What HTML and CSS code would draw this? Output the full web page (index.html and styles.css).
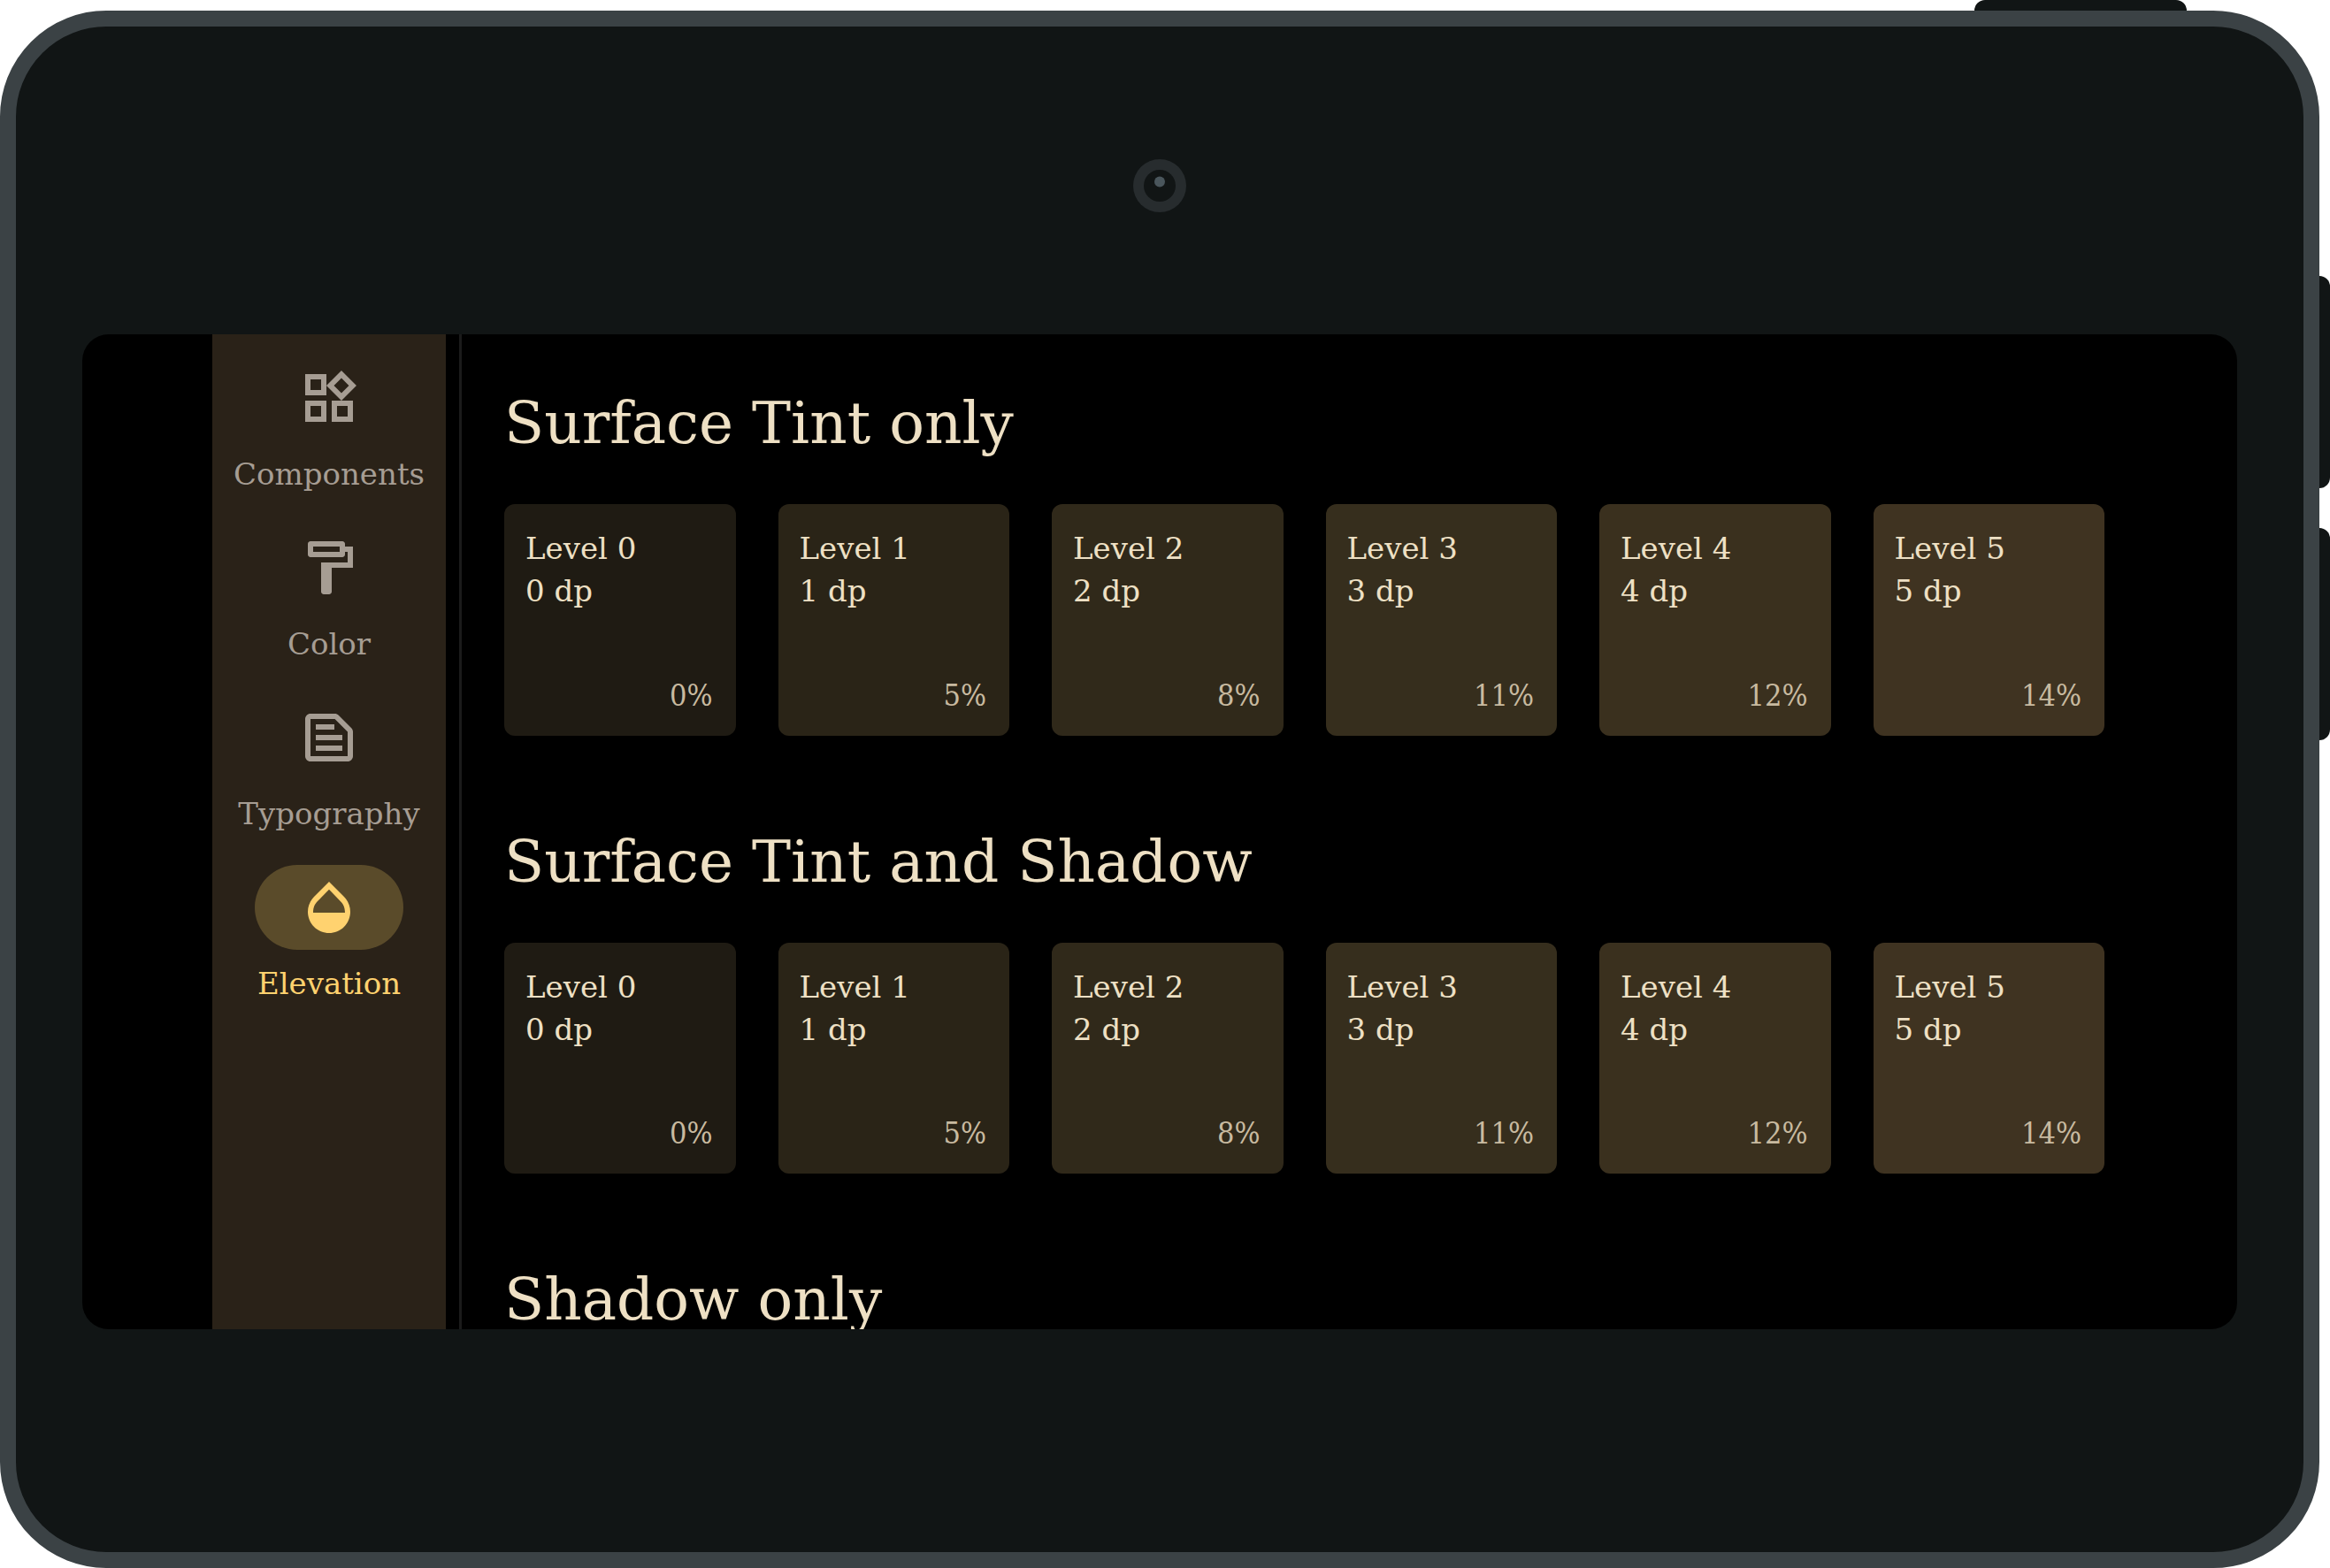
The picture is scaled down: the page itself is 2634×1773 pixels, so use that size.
FILE: index.html
```html
<!DOCTYPE html>
<html lang="en">
<head>
<meta charset="utf-8">
<meta name="viewport" content="width=device-width, initial-scale=1">
<title>Elevation</title>
<link rel="stylesheet" href="styles.css">
</head>
<body>
<div class="tablet">
  <div class="top-keys"><span class="key key-wide"></span></div>
  <div class="bezel">
    <div class="camera-bar">
      <svg class="camera" viewBox="0 0 60 60" aria-hidden="true"><circle cx="30" cy="30" r="30" fill="#272c2e"/><circle cx="30" cy="30" r="18" fill="#111515"/><circle cx="30" cy="25.5" r="6" fill="#4a565c"/></svg>
    </div>
    <div class="screen">
      <nav class="rail">
        <a class="rail-item" href="#components">
          <span class="rail-icon"><svg viewBox="0 0 24 24" aria-hidden="true"><path d="M16.66 4.52l2.83 2.83-2.83 2.83-2.83-2.83 2.83-2.83M9 5v4H5V5h4m10 10v4h-4v-4h4M9 15v4H5v-4h4m7.66-13.31L11 7.34 16.66 13l5.66-5.66-5.66-5.65zM11 3H3v8h8V3zm10 10h-8v8h8v-8zm-10 0H3v8h8v-8z"/></svg></span>
          <span class="rail-label">Components</span>
        </a>
        <a class="rail-item" href="#color">
          <span class="rail-icon"><svg viewBox="0 0 24 24" aria-hidden="true"><path d="M18 4V3c0-.55-.45-1-1-1H5c-.55 0-1 .45-1 1v4c0 .55.45 1 1 1h12c.55 0 1-.45 1-1V6h1v4H9v11c0 .55.45 1 1 1h2c.55 0 1-.45 1-1v-9h8V4h-3zm-2 2H6V4h10v2z"/></svg></span>
          <span class="rail-label">Color</span>
        </a>
        <a class="rail-item" href="#typography">
          <span class="rail-icon"><svg viewBox="0 0 24 24" aria-hidden="true"><path d="M14.17 5L19 9.83V19H5V5h9.17m0-2H5c-1.1 0-2 .9-2 2v14c0 1.1.9 2 2 2h14c1.1 0 2-.9 2-2V9.83c0-.53-.21-1.04-.59-1.41l-4.83-4.83c-.37-.38-.88-.59-1.41-.59zM7 15h10v2H7v-2zm0-4h10v2H7v-2zm0-4h7v2H7V7z"/></svg></span>
          <span class="rail-label">Typography</span>
        </a>
        <a class="rail-item is-active" href="#elevation" aria-current="page">
          <span class="rail-icon"><svg viewBox="0 0 24 24" aria-hidden="true"><path d="M17.66 8L12 2.35 6.34 8C4.78 9.56 4 11.64 4 13.64s.78 4.11 2.34 5.67 3.61 2.35 5.66 2.35 4.1-.79 5.66-2.35S20 15.64 20 13.64 19.22 9.56 17.66 8zM6 14c.01-2 .62-3.27 1.76-4.4L12 5.27l4.24 4.38C17.38 10.77 17.99 12 18 14H6z"/></svg></span>
          <span class="rail-label">Elevation</span>
        </a>
      </nav>
      <main class="content">
        <section class="group">
          <h2 class="group-title">Surface Tint only</h2>
          <div class="cards">
            <article class="card level-0"><p>Level 0<br>0 dp</p><p class="tint">0%</p></article>
            <article class="card level-1"><p>Level 1<br>1 dp</p><p class="tint">5%</p></article>
            <article class="card level-2"><p>Level 2<br>2 dp</p><p class="tint">8%</p></article>
            <article class="card level-3"><p>Level 3<br>3 dp</p><p class="tint">11%</p></article>
            <article class="card level-4"><p>Level 4<br>4 dp</p><p class="tint">12%</p></article>
            <article class="card level-5"><p>Level 5<br>5 dp</p><p class="tint">14%</p></article>
          </div>
        </section>
        <section class="group">
          <h2 class="group-title">Surface Tint and Shadow</h2>
          <div class="cards">
            <article class="card level-0"><p>Level 0<br>0 dp</p><p class="tint">0%</p></article>
            <article class="card level-1"><p>Level 1<br>1 dp</p><p class="tint">5%</p></article>
            <article class="card level-2"><p>Level 2<br>2 dp</p><p class="tint">8%</p></article>
            <article class="card level-3"><p>Level 3<br>3 dp</p><p class="tint">11%</p></article>
            <article class="card level-4"><p>Level 4<br>4 dp</p><p class="tint">12%</p></article>
            <article class="card level-5"><p>Level 5<br>5 dp</p><p class="tint">14%</p></article>
          </div>
        </section>
        <section class="group">
          <h2 class="group-title">Shadow only</h2>
        </section>
      </main>
    </div>
  </div>
  <div class="side-keys"><span class="key key-tall"></span><span class="key key-tall"></span></div>
</div>
</body>
</html>
```
FILE: styles.css
```css
* {
  box-sizing: border-box;
}

body {
  margin: 0;
  background: #fff;
  color: #eee0c4;
  font-family: "DejaVu Serif", serif;
  font-size: 34px;
  line-height: 48px;
}

h2,
p {
  margin: 0;
}

/* Device frame */
.tablet {
  display: grid;
  grid-template-columns: minmax(0, 1fr) 12px;
  grid-template-rows: 12px minmax(0, 1fr);
  height: 100vh;
}

.top-keys {
  grid-column: 1 / -1;
  display: flex;
  justify-content: flex-end;
  padding-right: 162px;
}

.side-keys {
  display: flex;
  flex-direction: column;
  gap: 45px;
  padding-top: 300px;
}

.key {
  background: #111515;
}

.key-wide {
  width: 240px;
  border-radius: 12px 12px 0 0;
}

.key-tall {
  height: 240px;
  border-radius: 0 12px 12px 0;
}

.bezel {
  display: flex;
  flex-direction: column;
  padding: 0 75px 252px;
  border: 18px solid #3b4245;
  border-radius: 120px;
  background: #111515;
}

.camera-bar {
  display: flex;
  justify-content: center;
  padding: 150px 0 138px;
}

.camera {
  width: 60px;
  height: 60px;
}

.screen {
  flex: 1;
  display: flex;
  min-height: 0;
  padding: 0 150px 0 147px;
  overflow: hidden;
  border-radius: 30px;
  background: #000;
}

/* Navigation rail */
.rail {
  flex: none;
  display: flex;
  flex-direction: column;
  gap: 34px;
  width: 264px;
  padding-top: 24px;
  background: #2a2218;
}

.rail-item {
  display: flex;
  flex-direction: column;
  align-items: center;
  gap: 14px;
  color: #a69d93;
  text-decoration: none;
}

.rail-icon {
  display: flex;
  align-items: center;
  justify-content: center;
  width: 168px;
  height: 96px;
  border-radius: 48px;
}

.rail-icon svg {
  width: 72px;
  height: 72px;
  fill: currentColor;
}

.is-active {
  color: #ffd26f;
}

.is-active .rail-icon {
  background: #5a4b2a;
}

/* Elevation cards */
.content {
  flex: 1;
  display: flex;
  flex-direction: column;
  gap: 98px;
  min-width: 0;
  margin-left: 15px;
  padding: 56px 0 0 48px;
  border-left: 3px solid #1b1b1b;
}

.group-title {
  margin-bottom: 46px;
  font-size: 66px;
  font-weight: 400;
  line-height: 90px;
}

.cards {
  display: grid;
  grid-template-columns: repeat(6, minmax(0, 1fr));
  gap: 48px;
}

.card {
  display: flex;
  flex-direction: column;
  justify-content: space-between;
  aspect-ratio: 1;
  padding: 26px 26px 22px 24px;
  border-radius: 12px;
}

.tint {
  align-self: flex-end;
  color: #c8baa0;
  font-family: "DejaVu Serif Condensed", "DejaVu Serif", serif;
}

.level-0 { background: #1f1b13; }
.level-1 { background: #2a2417; }
.level-2 { background: #30291a; }
.level-3 { background: #362e1d; }
.level-4 { background: #3a301e; }
.level-5 { background: #3f3321; }
```
